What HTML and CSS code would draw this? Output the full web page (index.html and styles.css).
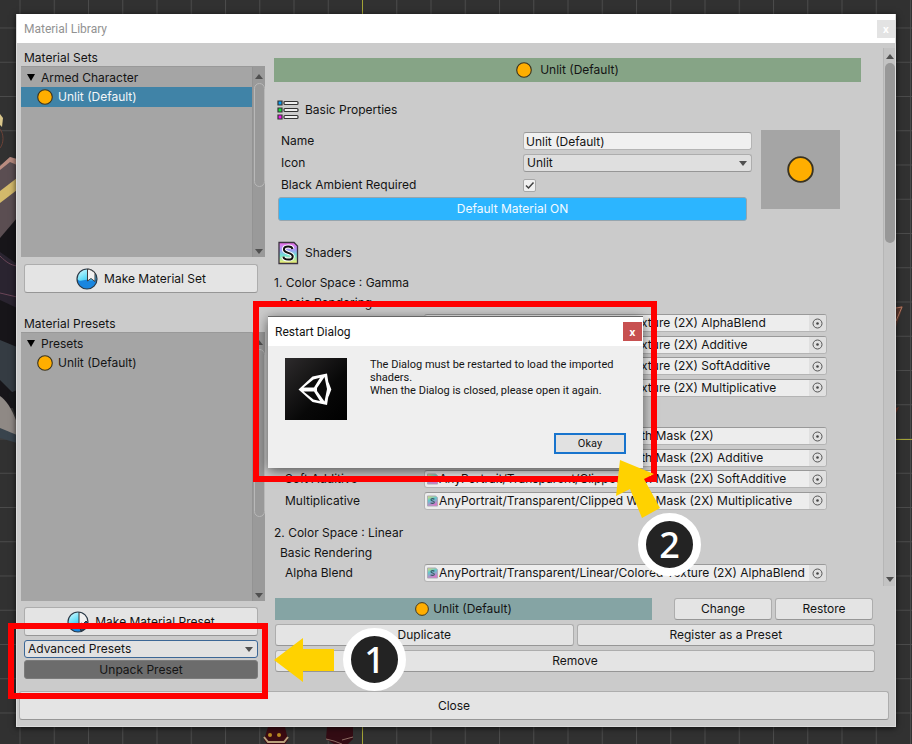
FILE: index.html
```
<!DOCTYPE html>
<html lang="en">
<head>
<meta charset="utf-8">
<title>Material Library</title>
<link rel="stylesheet" href="styles.css">
</head>
<body>
<svg class="defs" aria-hidden="true">
  <defs>
    <linearGradient id="rainbow" x1="0" y1="0" x2="0" y2="1">
      <stop offset="0" stop-color="#f26be8"/><stop offset=".35" stop-color="#a59bf5"/><stop offset=".6" stop-color="#6fe3d6"/><stop offset="1" stop-color="#fff069"/>
    </linearGradient>
    <linearGradient id="soft" x1="0" y1="0" x2=".4" y2="1">
      <stop offset="0" stop-color="#e6e06e"/><stop offset=".45" stop-color="#5fc9cf"/><stop offset="1" stop-color="#d777c9"/>
    </linearGradient>
    <linearGradient id="sphere" x1="0" y1="0" x2="0.6" y2="1">
      <stop offset="0" stop-color="#e4ffff"/><stop offset=".5" stop-color="#5fdcf8"/><stop offset=".8" stop-color="#35aef0"/>
    </linearGradient>
    <symbol id="dot" viewBox="0 0 16 16"><circle cx="8" cy="8" r="7.3" fill="#ffae00" stroke="#3a3320" stroke-width="1.1"/></symbol>
    <symbol id="picker" viewBox="0 0 11 11"><circle cx="5.5" cy="5.5" r="4.5" fill="none" stroke="#555"/><circle cx="5.5" cy="5.5" r="1.3" fill="#444"/></symbol>
    <symbol id="down" viewBox="0 0 8 5"><path d="M0 0h8L4 5z" fill="#505050"/></symbol>
    <symbol id="up" viewBox="0 0 8 5"><path d="M0 5h8L4 0z" fill="#505050"/></symbol>
    <symbol id="shader" viewBox="0 0 12 12"><path d="M.5.5h9l2 2v9H.5z" fill="url(#soft)" stroke="#a9a9b5"/><path d="M8 4.2C7.400 3.200 4.300 3 4.300 4.700 4.300 6.300 8 5.500 8 7.300 8 9 4.600 8.900 4 7.800" fill="none" stroke="#3c5a66" stroke-width="1.2"/></symbol>
  </defs>
</svg>

<svg class="backdrop" aria-hidden="true">
  <defs>
    <pattern id="grid" x="19.500" y="27.500" width="34.250" height="34.250" patternUnits="userSpaceOnUse">
      <rect width="34.250" height="34.250" fill="#313131"/><path d="M.5 0V34.250M0 .5H34.250" stroke="#4b4b4b"/>
    </pattern>
  </defs>
  <rect width="100%" height="100%" fill="url(#grid)"/>
  <path d="M362.500 0V744M896 439.500H912" stroke="#a3a336"/>
  <path d="M0 114l3 4-1 9-2-2z" fill="#d9c68a"/>
  <path d="M0 129c4 5 4 14 0 19" fill="none" stroke="#6b4136"/>
  <path d="M0 166l10-9 7 2v85H0z" fill="#5b4e52"/>
  <path d="M0 166l10-9 7 2v6l-7-3-10 8z" fill="#b98c80"/>
  <path d="M0 191l17-13v12L0 203z" fill="#d3b96b"/>
  <path d="M0 238l17-20v190H0z" fill="#171519"/>
  <path d="M0 252l17 12v44L0 300z" fill="#2a2430"/>
  <path d="M0 256c7 7 11 9 17 10M0 293l17 4" fill="none" stroke="#6a4658"/>
  <path d="M0 340l17 7v50L0 380z" fill="#353c43"/>
  <path d="M8 394l9-4v30z" fill="#17181b"/>
  <path d="M0 396c5 3 12 12 17 27v16L0 434z" fill="#8f8985"/>
  <path d="M0 428l17 7v8L0 438z" fill="#39444d"/>
  <path d="M896 307l7-1-6 18-1 3z" fill="#5c3a30"/>
  <path d="M896 308l6-1-6 14" fill="none" stroke="#b87a62"/>
  <path d="M896 408l3-1-3 6z" fill="#6e3427"/>
  <path d="M268 727h17l3 13-3 4h-18l-3-4z" fill="#3b0b12"/>
  <path d="M264 737l4 5h16l4-5" fill="none" stroke="#b9a07c" stroke-width="2"/>
  <circle cx="270" cy="735" r="2" fill="#b98a22"/><circle cx="279" cy="735" r="2" fill="#b98a22"/>
  <path d="M327 727h26v12l-5 5h-14l-8-5z" fill="#330c14"/>
  <path d="M326 739l8 2 8 3M342 740l11-3" fill="none" stroke="#8c6b62"/>
</svg>

<main class="window">
  <header class="titlebar"><h1>Material Library</h1><button class="win-close" type="button" aria-label="Close window">x</button></header>
  <div class="columns">
    <section class="side">
      <h2>Material Sets</h2>
      <div class="list list-sets">
        <ul>
          <li><svg class="fold" viewBox="0 0 8 7"><path d="M0 0h8L4 7z"/></svg>Armed Character</li>
          <li class="child selected"><svg class="dot"><use href="#dot"/></svg>Unlit (Default)</li>
        </ul>
        <div class="scrollbar"><svg><use href="#up"/></svg><i class="thumb"></i><svg class="end"><use href="#down"/></svg></div>
      </div>
      <button class="btn make" type="button">
        <svg viewBox="0 0 22 22"><circle cx="11" cy="11" r="10" fill="url(#sphere)"/><path d="M1 11c4 4 7 0 11 1 3 1 6 1 9-1 0 6-5 10-10 10S1 17 1 11z" fill="#1a86df"/><circle cx="11" cy="11" r="10" fill="none" stroke="#2c3a48" stroke-width="1.2"/><path d="M11.500 1v12l3.500-2.500 4 3V5C17 3 14 1 11.500 1z" fill="#f1f1f1" stroke="#3c3c3c"/></svg>
        Make Material Set</button>
      <h2 class="presets-title">Material Presets</h2>
      <div class="list list-presets">
        <ul>
          <li><svg class="fold" viewBox="0 0 8 7"><path d="M0 0h8L4 7z"/></svg>Presets</li>
          <li class="child"><svg class="dot"><use href="#dot"/></svg>Unlit (Default)</li>
        </ul>
        <div class="scrollbar"><svg><use href="#up"/></svg><i class="thumb"></i><svg class="end"><use href="#down"/></svg></div>
      </div>
      <button class="btn make" type="button">
        <svg viewBox="0 0 22 22"><circle cx="11" cy="11" r="10" fill="url(#sphere)"/><path d="M1 13c4 3 7 2 11 2l9-4c0 6-5 10-10 10S2 18 1 13z" fill="#1a86df"/><path d="M12 1.500c5 0 9 4 9 9.500l-3 2-2-1-2 2-2-1z" fill="#f1f1f1"/><path d="M12 1v14M12 15l2-3 2 1 3-3 2 2-3 6-4 2z" fill="#1c4f86" stroke="#333"/><circle cx="11" cy="11" r="10" fill="none" stroke="#2c3a48" stroke-width="1.2"/></svg>
        Make Material Preset</button>
      <div class="dropdown focused">
        <select aria-label="Advanced presets"><option>Advanced Presets</option></select>
        <svg><use href="#down"/></svg>
      </div>
      <button class="btn unpack" type="button">Unpack Preset</button>
    </section>

    <section class="detail">
      <div class="viewport">
        <div class="props">
          <div class="banner green"><svg class="dot"><use href="#dot"/></svg>Unlit (Default)</div>
          <h3 class="basic">
            <svg viewBox="0 0 22 20"><g stroke="#333" stroke-width="1.2"><path d="M1 1h4v4H1z" fill="#0c9cf5"/><path d="M1 8h4v4H1z" fill="#13e03a"/><path d="M1 15h4v4H1z" fill="#f214ee"/></g><g fill="#eee" stroke="#333" stroke-width="1.2"><rect x="7" y="1.500" width="14" height="3" rx="1"/><rect x="7" y="8.500" width="14" height="3" rx="1"/><rect x="7" y="15.500" width="14" height="3" rx="1"/></g></svg>
            Basic Properties</h3>
          <div class="basic-grid">
            <div class="basic-form">
              <label for="mname">Name</label><input id="mname" class="text" type="text" value="Unlit (Default)">
              <label for="micon">Icon</label>
              <div class="dropdown"><select id="micon"><option>Unlit</option></select><svg><use href="#down"/></svg></div>
              <label for="mblack">Black Ambient Required</label><input id="mblack" class="check" type="checkbox" checked>
              <button class="btn default-on" type="button">Default Material ON</button>
            </div>
            <div class="preview"><svg><use href="#dot"/></svg></div>
          </div>
          <h3 class="shaders">
            <svg viewBox="0 0 22 24"><path d="M2 1.500h15l3.500 3.500v17.500H2z" fill="url(#rainbow)" stroke="#3b3340" stroke-width="1.3"/><path d="M15.500 8c-.6-3.400-8.600-3.500-8.600.6 0 4.300 8.800 2.200 8.800 6.800 0 4.300-8.800 4.100-9.300.3" fill="none" stroke="#fff" stroke-width="4"/><path d="M15.500 8c-.6-3.400-8.600-3.500-8.600.6 0 4.300 8.800 2.200 8.800 6.800 0 4.300-8.800 4.100-9.300.3" fill="none" stroke="#111" stroke-width="2"/></svg>
            Shaders</h3>
          <h4>1. Color Space : Gamma</h4>
          <h5>Basic Rendering</h5>
          <div class="rows">
            <label for="g1">Alpha Blend</label><div class="object"><svg><use href="#shader"/></svg><input id="g1" type="text" value="AnyPortrait/Transparent/Colored Texture (2X) AlphaBlend"><button type="button" aria-label="Pick"><svg><use href="#picker"/></svg></button></div>
            <label for="g2">Additive</label><div class="object"><svg><use href="#shader"/></svg><input id="g2" type="text" value="AnyPortrait/Transparent/Colored Texture (2X) Additive"><button type="button" aria-label="Pick"><svg><use href="#picker"/></svg></button></div>
            <label for="g3">Soft Additive</label><div class="object"><svg><use href="#shader"/></svg><input id="g3" type="text" value="AnyPortrait/Transparent/Colored Texture (2X) SoftAdditive"><button type="button" aria-label="Pick"><svg><use href="#picker"/></svg></button></div>
            <label for="g4">Multiplicative</label><div class="object"><svg><use href="#shader"/></svg><input id="g4" type="text" value="AnyPortrait/Transparent/Colored Texture (2X) Multiplicative"><button type="button" aria-label="Pick"><svg><use href="#picker"/></svg></button></div>
          </div>
          <h5 class="clipped">Clipped Rendering</h5>
          <div class="rows">
            <label for="c1">Alpha Blend</label><div class="object"><svg><use href="#shader"/></svg><input id="c1" type="text" value="AnyPortrait/Transparent/Clipped With Mask (2X)"><button type="button" aria-label="Pick"><svg><use href="#picker"/></svg></button></div>
            <label for="c2">Additive</label><div class="object"><svg><use href="#shader"/></svg><input id="c2" type="text" value="AnyPortrait/Transparent/Clipped With Mask (2X) Additive"><button type="button" aria-label="Pick"><svg><use href="#picker"/></svg></button></div>
            <label for="c3">Soft Additive</label><div class="object"><svg><use href="#shader"/></svg><input id="c3" type="text" value="AnyPortrait/Transparent/Clipped With Mask (2X) SoftAdditive"><button type="button" aria-label="Pick"><svg><use href="#picker"/></svg></button></div>
            <label for="c4">Multiplicative</label><div class="object"><svg><use href="#shader"/></svg><input id="c4" type="text" value="AnyPortrait/Transparent/Clipped With Mask (2X) Multiplicative"><button type="button" aria-label="Pick"><svg><use href="#picker"/></svg></button></div>
          </div>
          <h4 class="linear">2. Color Space : Linear</h4>
          <h5>Basic Rendering</h5>
          <div class="rows">
            <label for="l1">Alpha Blend</label><div class="object"><svg><use href="#shader"/></svg><input id="l1" type="text" value="AnyPortrait/Transparent/Linear/Colored Texture (2X) AlphaBlend"><button type="button" aria-label="Pick"><svg><use href="#picker"/></svg></button></div>
            <span></span><div class="object next"></div>
          </div>
        </div>
        <div class="scrollbar main"><svg><use href="#up"/></svg><i class="thumb"></i><svg class="end"><use href="#down"/></svg></div>
      </div>
      <div class="actions">
        <div class="action-row top">
          <div class="banner teal"><svg class="dot"><use href="#dot"/></svg>Unlit (Default)</div>
          <button class="btn" type="button">Change</button>
          <button class="btn" type="button">Restore</button>
        </div>
        <div class="action-row">
          <button class="btn" type="button">Duplicate</button>
          <button class="btn" type="button">Register as a Preset</button>
        </div>
        <div class="action-row"><button class="btn" type="button">Remove</button></div>
      </div>
    </section>
  </div>
  <button class="btn close" type="button">Close</button>
</main>

<section class="dialog" role="dialog" aria-labelledby="dlg-title">
  <header class="titlebar"><h2 id="dlg-title">Restart Dialog</h2><button class="win-close" type="button" aria-label="Close dialog">x</button></header>
  <div class="dialog-body">
    <svg class="logo" viewBox="0 0 62 62">
      <defs><linearGradient id="lg" x1="0" y1="0" x2="1" y2="1"><stop offset="0" stop-color="#2d2b2c"/><stop offset=".6" stop-color="#080808"/><stop offset="1" stop-color="#000"/></linearGradient></defs>
      <rect width="62" height="62" fill="url(#lg)"/>
      <path d="M13.500 31.500L27.500 18.500 42 15.500 44.500 31.500 42 47 27.500 44z" fill="#fff"/>
      <path d="M32 30L39.500 19 42 31 39.500 43.500 32 33zM28.500 21.500L35 19.800 29 29.500H18.500zM18.500 33.500H29L35 43 28.500 41.500z" fill="#0b0b0b"/>
      <path d="M42.500 25l2.500 6.500-2.500 6.500" fill="none" stroke="#fff" stroke-width="2.500"/>
    </svg>
    <p>The Dialog must be restarted to load the imported shaders.<br>When the Dialog is closed, please open it again.</p>
    <button class="okay" type="button">Okay</button>
  </div>
</section>

<div class="mark mark-dialog"></div>
<div class="mark mark-presets"></div>
<svg class="arrow arrow-left" viewBox="0 0 60 44"><path d="M0 22L29 0V11H60V33H29V44z" fill="#ffd200"/></svg>
<svg class="arrow arrow-up" viewBox="0 0 44 58"><path d="M4 0L38 14 28 19 44 48 26 58 14 29 0 36z" fill="#ffd200"/></svg>
<div class="step step-one">1</div>
<div class="step step-two">2</div>
</body>
</html>
```
FILE: styles.css
```
* { box-sizing: border-box; }
body {
  margin: 0;
  position: relative;
  min-height: 100vh;
  padding: 14px 16px 16px;
  overflow: hidden;
  background: #313131;
  color: #141414;
  font: 12px/16px Inter, "Liberation Sans", sans-serif;
}
h1, h2, h3, h4, h5, p, ul { margin: 0; padding: 0; font-size: inherit; font-weight: 400; list-style: none; }
button, input, select { font: inherit; color: inherit; margin: 0; }
svg { display: block; flex: none; }
.defs { position: absolute; width: 0; height: 0; }
.backdrop { position: absolute; inset: 0; width: 100%; height: 100%; }
.window { position: relative; background: #cbcbcb; box-shadow: 0 1px 6px rgba(0, 0, 0, .7); border: 0 solid #dcdcdc; border-width: 0 1px 1px; padding-bottom: 6px; }

.titlebar { display: flex; align-items: center; justify-content: space-between; height: 29px; padding-left: 7px; background: #fff; font: 12px/16px Roboto, sans-serif; }
.window > .titlebar { color: #929292; }
.win-close { width: 18px; height: 18px; padding: 0; border: 0; background: #e3e3e3; color: #fff; font: bold 10px/16px "Noto Sans", sans-serif; }
.columns { display: flex; gap: 9px; padding: 0 0 0 4px; }
.side { width: 244px; display: flex; flex-direction: column; padding-top: 7px; }
.side h2 { padding-left: 3px; }
.list { display: flex; background: #a5a5a5; border-top: 1px solid #999; }
.list ul { flex: 1; padding-top: 1px; }
.list-sets { height: 191px; }
.list-presets { height: 269px; }
.list li { display: flex; align-items: center; gap: 6px; height: 19px; padding-left: 6px; }
.list li.child { padding-left: 16px; gap: 5px; height: 20px; }
.list li.selected { background: #4083a7; color: #f2f6f8; }
.fold { width: 8px; height: 7px; }
.dot { width: 16px; height: 16px; }
.scrollbar { display: flex; flex-direction: column; align-items: center; width: 13px; padding: 7px 0 3px; background: #9a9a9a; border-left: 1px solid #939393; }
.scrollbar svg { width: 8px; height: 5px; }
.scrollbar .end { margin-top: auto; }
.thumb { width: 11px; height: 104px; margin-top: 4px; border: 1px solid #b8b8b8; border-radius: 6px; background: #999; }
.list-presets .thumb { height: 168px; }
.scrollbar.main { padding: 6px 0 4px; background: #c3c3c3; border-color: #b6b6b6; }
.main .thumb { width: 10px; height: 180px; border: 0; background: #989898; }

.btn { display: flex; align-items: center; justify-content: center; gap: 6px; padding: 0; border: 1px solid #adadad; border-bottom-color: #969696; border-radius: 3px; background: #e4e4e4; }
.make { height: 29px; margin: 7px 7px 0 3px; }
.make svg { width: 22px; height: 22px; }
.side .presets-title { margin-top: 23px; }
.list-presets + .make { margin-top: 6px; }
.dropdown { position: relative; height: 18px; }
.dropdown select { display: block; width: 100%; height: 100%; padding: 0 3px; appearance: none; border: 1px solid #adadad; border-bottom-color: #969696; border-radius: 3px; background: #dfdfdf; }
.dropdown svg { position: absolute; right: 5px; top: 7px; width: 8px; height: 5px; pointer-events: none; }
.side .dropdown { height: 18px; margin: 4px 7px 2px 3px; }
.focused select { border-color: #3c6796; background: #e2e2e2; }
.unpack { height: 19px; margin: 0 7px 0 3px; border-color: #7b7b7b; background: #6c6c6c; }

.detail { flex: 1; min-width: 0; padding-top: 5px; }
.viewport { display: flex; height: 538px; overflow: hidden; }
.viewport .scrollbar { flex: none; width: 12px; }
.props { flex: 1; min-width: 0; padding: 10px 22px 0 0; }
.banner { display: flex; align-items: center; justify-content: center; }
.green { height: 24px; gap: 8px; background: #86a486; }
.props h3 { display: flex; align-items: center; gap: 6px; padding-left: 3px; }
.basic { height: 24px; margin-top: 16px; }
.basic svg { width: 22px; height: 20px; }
.basic-grid { display: flex; gap: 9px; margin-top: 8px; padding-right: 21px; }
.basic-form { flex: 1; display: grid; grid-template-columns: 242px 1fr; grid-template-rows: 22px 22px 22px 25px; align-items: center; padding-left: 7px; }
.text { width: 100%; height: 18px; padding: 0 2px; border: 1px solid #b4b4b4; border-top-color: #999; border-radius: 3px; background: #f0f0f0; outline: 0; }
.check { width: 13px; height: 13px; appearance: none; border: 1px solid #a8a8a8; border-radius: 2px; background: #f0f0f0 url("data:image/svg+xml,%3Csvg xmlns='http://www.w3.org/2000/svg' viewBox='0 0 11 11'%3E%3Cpath d='M2 5.500L4.500 8 9.500 2.500' fill='none' stroke='%23404040' stroke-width='1.500'/%3E%3C/svg%3E"); }
.default-on { grid-column: 1 / 3; height: 24px; margin: 0 5px 0 -3px; border-color: #96a5ae; background: #2cb5ff; color: #f2faff; }
.preview { display: grid; place-items: center; width: 79px; height: 79px; background: #a5a5a5; }
.preview svg { width: 27px; height: 27px; }
.shaders { height: 24px; margin-top: 20px; }
.shaders svg { width: 22px; height: 24px; }
.props h4 { margin-top: 10px; }
.props h5 { margin: 4px 0 1px; padding-left: 6px; }
.rows { display: grid; grid-template-columns: 139px 1fr; grid-auto-rows: 22px 21px; align-items: center; padding: 0 34px 0 11px; }
.object { display: flex; align-items: center; height: 18px; padding-left: 2px; border: 1px solid #b4b4b4; border-top-color: #999; border-radius: 3px; background: #ededed; overflow: hidden; }
.object > svg { width: 11px; height: 12px; }
.object input { flex: 1; min-width: 0; height: 16px; padding: 0 0 0 1px; border: 0; outline: 0; background: none; }
.object button { display: grid; place-items: center; width: 17px; height: 16px; padding: 0; border: 0; background: #e0e0e0; }
.object button svg { width: 11px; height: 11px; }
.props .clipped { margin: 9px 0 2px; }
.props .linear { margin-top: 14px; }

.actions { display: flex; flex-direction: column; gap: 4px; padding: 12px 20px 0 1px; }
.action-row { display: flex; gap: 3px; }
.action-row .btn { flex: 1; height: 22px; }
.action-row.top { padding-right: 2px; }
.action-row.top .btn { flex: 0 0 98px; }
.teal { flex: 1; height: 22px; margin-right: 19px; gap: 4px; background: #85a4a4; }
.teal .dot { width: 14px; height: 14px; }
.close { width: calc(100% - 8px); height: 29px; margin: 12px 6px 0 2px; }

.dialog { position: absolute; left: 268px; top: 316px; width: 375px; background: #efefef; border-top: 1px solid #666; box-shadow: 0 3px 12px rgba(0, 0, 0, .6); font-family: Roboto, sans-serif; }
.dialog .win-close { width: 19px; height: 19px; margin-right: 1px; background: #c75050; }
.dialog .titlebar { color: #111; }
.dialog-body { display: grid; grid-template-columns: 62px 1fr; column-gap: 23px; padding: 12px 17px 14px; font: 11px/13px Roboto, sans-serif; }
.logo { width: 62px; height: 62px; }
.okay { grid-column: 2; justify-self: end; width: 72px; height: 21px; margin-top: 13px; padding: 0; border: 2px solid #1874cd; background: #e1e1e1; }

.mark { position: absolute; border: 6px solid #f00; pointer-events: none; }
.mark-dialog { left: 253px; top: 301px; width: 404px; height: 181px; }
.mark-presets { left: 8px; top: 623px; width: 260px; height: 76px; }
.arrow { position: absolute; }
.arrow-left { left: 274px; top: 638px; width: 60px; height: 44px; }
.arrow-up { left: 616px; top: 460px; width: 44px; height: 58px; }
.step { position: absolute; display: grid; place-items: center; width: 63px; height: 63px; border: 8px solid #fff; border-radius: 50%; background: #232323; color: #fff; font: 500 36px/47px "Noto Sans", sans-serif; }
.step-one { left: 343px; top: 628px; }
.step-two { left: 638px; top: 513px; }
```
